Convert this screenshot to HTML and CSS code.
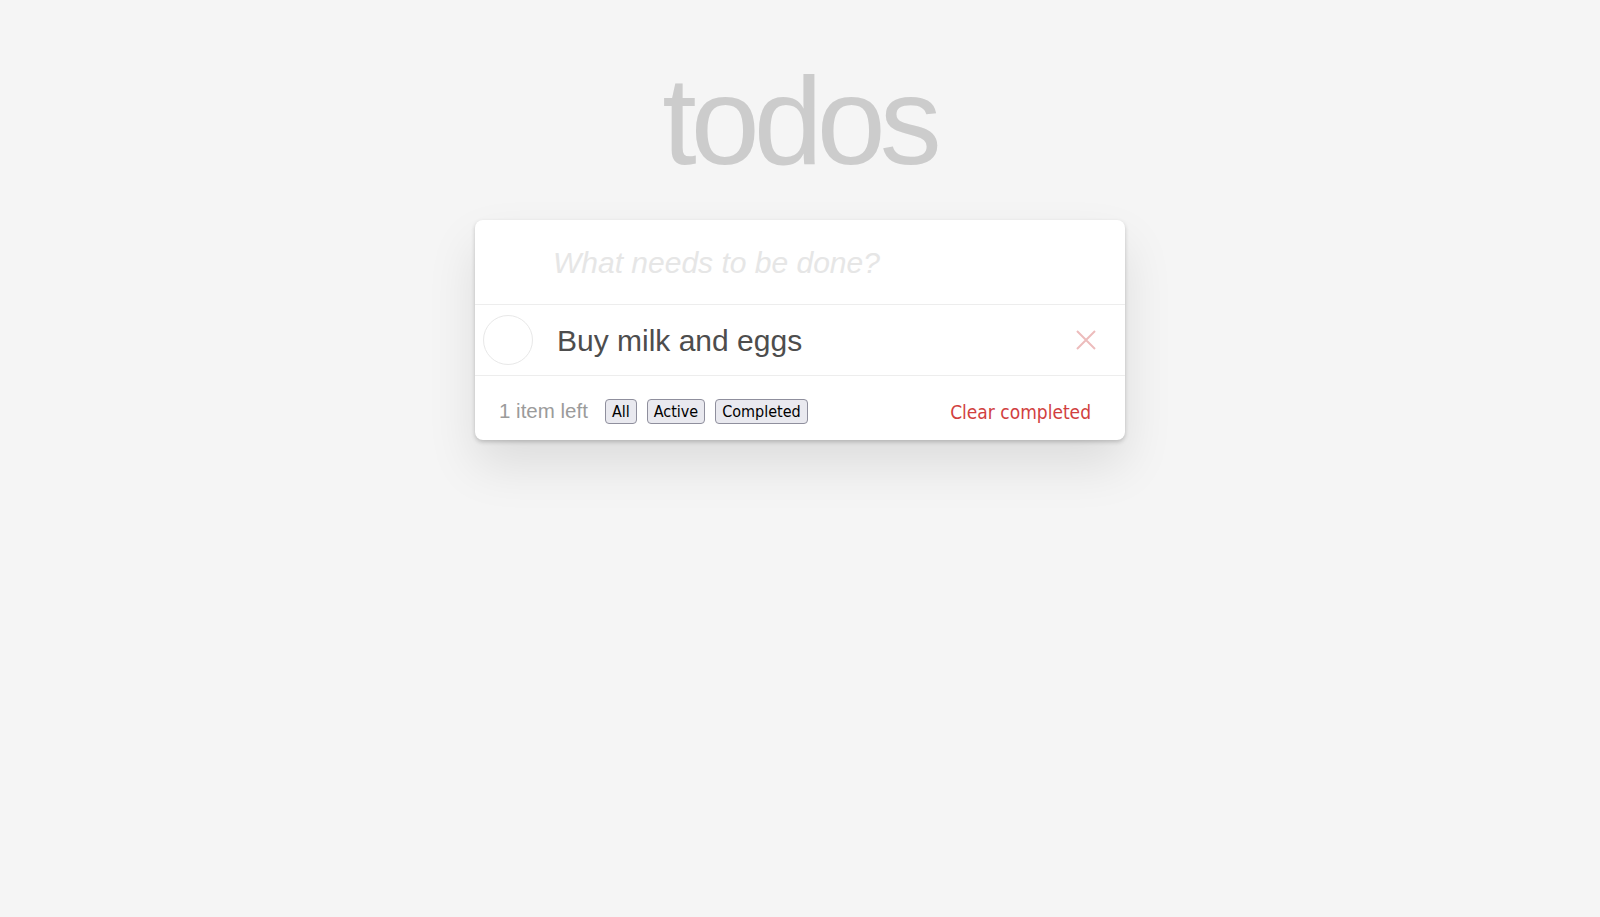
FILE: index.html
```html
<!DOCTYPE html>
<html lang="en">
<head>
<meta charset="utf-8">
<title>todos</title>
<link rel="stylesheet" href="styles.css">
</head>
<body>
<main class="app">
  <h1 class="title">todos</h1>
  <section class="card">
    <header class="new-todo">
      <input class="new-todo-input" type="text" placeholder="What needs to be done?">
    </header>
    <ul class="todo-list">
      <li class="todo">
        <span class="toggle"></span>
        <span class="todo-label">Buy milk and eggs</span>
        <button class="destroy" aria-label="Delete">
          <svg width="20" height="20" viewBox="0 0 20 20"><path d="M1 1 L19 19 M19 1 L1 19" stroke="currentColor" stroke-width="2" fill="none"/></svg>
        </button>
      </li>
    </ul>
    <footer class="footer">
      <span class="count">1 item left</span>
      <div class="filters">
        <button class="filter">All</button>
        <button class="filter">Active</button>
        <button class="filter">Completed</button>
      </div>
      <button class="clear">Clear completed</button>
    </footer>
  </section>
</main>
</body>
</html>
```

FILE: styles.css
```css
html, body {
  margin: 0;
  padding: 0;
  background: #f5f5f5;
  min-height: 100%;
}
html {
  height: 100%;
}
body {
  font-family: "Liberation Sans", Arial, sans-serif;
  color: #4d4d4d;
}
.app {
  width: 650px;
  margin: 0 auto;
  padding-top: 59px;
  padding-bottom: 120px;
  display: flex;
  flex-direction: column;
  align-items: stretch;
}
.title {
  margin: 0;
  height: 124px;
  font-size: 124px;
  line-height: 124px;
  font-weight: 400;
  letter-spacing: -6px;
  text-align: center;
  color: #cccccc;
  text-indent: -2px;
}
.card {
  margin-top: 37px;
  background: #fff;
  border-radius: 8px;
  box-shadow: 0 2px 4px 0 rgba(0,0,0,0.2), 0 25px 50px 0 rgba(0,0,0,0.1);
}
.new-todo {
  height: 84px;
  border-bottom: 1px solid #ededed;
  display: flex;
  align-items: center;
}
.new-todo-input {
  width: 100%;
  border: 0;
  outline: none;
  background: transparent;
  padding: 2px 16px 0 78px;
  font-family: "Liberation Sans", Arial, sans-serif;
  font-size: 30px;
  color: #4d4d4d;
}
.new-todo-input::placeholder {
  font-style: italic;
  color: #e6e6e6;
}
.todo-list {
  list-style: none;
  margin: 0;
  padding: 0;
}
.todo {
  height: 70px;
  border-bottom: 1px solid #ededed;
  display: flex;
  align-items: center;
  padding: 0 29px 0 8px;
}
.toggle {
  width: 48px;
  height: 48px;
  border: 1.5px solid #e8e8e8;
  border-radius: 50%;
  flex: none;
}
.todo-label {
  flex: 1;
  margin-left: 24px;
  font-size: 30px;
  color: #4d4d4d;
  padding-top: 1px;
}
.destroy {
  border: 0;
  background: transparent;
  padding: 0;
  width: 20px;
  height: 20px;
  color: #edbcbc;
  display: flex;
}
.footer {
  box-sizing: border-box;
  height: 64px;
  display: flex;
  align-items: center;
  padding: 6px 34px 0 24px;
}
.count {
  font-size: 20.5px;
  color: #9b9b9b;
  margin-top: -1px;
}
.filters {
  display: flex;
  gap: 10px;
  margin-left: 17px;
}
.filter {
  font-family: "DejaVu Sans Condensed", "DejaVu Sans", Tahoma, sans-serif;
  font-size: 16px;
  color: #000;
  background: #e9e9ef;
  border: 1px solid #8f8f9d;
  border-radius: 4px;
  height: 25px;
  padding: 0 6px;
  line-height: 21px;
}
.clear {
  margin-left: auto;
  border: 0;
  background: transparent;
  padding: 0;
  font-family: "DejaVu Sans Condensed", "DejaVu Sans", Tahoma, sans-serif;
  font-size: 19px;
  color: #d13f3f;
  margin-top: 2px;
}
```
